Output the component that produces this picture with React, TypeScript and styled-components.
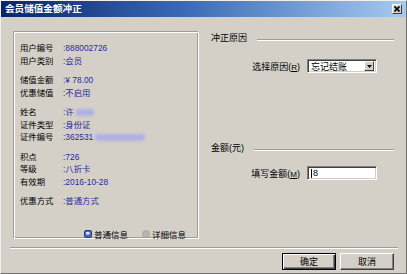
import styled, { createGlobalStyle } from 'styled-components'

const GlobalStyle = createGlobalStyle`
  html, body {
    margin: 0;
    padding: 0;
    background: #d4d0c8;
  }
  body {
    font-family: "Liberation Sans", "Noto Sans CJK SC", sans-serif;
    color: #000;
  }
`

// window frame

const Window = styled.div`
  width: 407px;
  height: 274px;
  box-sizing: border-box;
  border: 1px solid;
  border-color: #f2f0ec #6f6d68 #6f6d68 #f2f0ec;
  background: #d4d0c8;
  display: flex;
  flex-direction: column;
  overflow: hidden;
`

const TitleBar = styled.div`
  height: 16px;
  flex: none;
  display: flex;
  align-items: center;
  justify-content: space-between;
  padding: 0 4px 0 4px;
  background: linear-gradient(90deg, #0a246a 0%, #3a6ab4 45%, #a6caf0 100%);
`

const Title = styled.span`
  color: #fff;
  font-weight: bold;
  font-size: 9.6px;
  line-height: 16px;
`

const CloseBox = styled.div`
  width: 10px;
  height: 10px;
  box-sizing: border-box;
  background: #d4d0c8;
  border: 1px solid;
  border-color: #fff #404040 #404040 #fff;
  display: flex;
  align-items: center;
  justify-content: center;
`

const Main = styled.div`
  display: flex;
  gap: 12px;
  padding: 14px 12px 0 12px;
`

// left info panel

const Panel = styled.div`
  width: 186px;
  height: 208px;
  flex: none;
  box-sizing: border-box;
  border: 1px solid;
  border-color: #a09d97 #fff #fff #a09d97;
  box-shadow: inset 1px 1px #fff, inset -1px -1px #a09d97;
  padding: 10px 12px 0 6px;
  display: flex;
  flex-direction: column;
  font-size: 8.4px;
`

const Group = styled.div`
  margin-bottom: 7px;
`

const Row = styled.div`
  display: flex;
  align-items: center;
  height: 12.5px;
  line-height: 12.5px;
  white-space: nowrap;
`

const Label = styled.span`
  width: 43px;
  flex: none;
  color: #000;
`

const Value = styled.span`
  color: #2a2a9c;
  display: flex;
  align-items: center;
`

const Redacted = styled.span<{ $w: number }>`
  display: inline-block;
  width: ${({ $w }) => $w}px;
  height: 7px;
  margin-left: 2px;
  background: #aeb0e4;
  border-radius: 3px;
  filter: blur(1.4px);
`

const RadioRow = styled.div`
  margin-top: 13px;
  display: flex;
  justify-content: flex-end;
  gap: 14px;
  font-size: 8.5px;
`

const Radio = styled.span`
  display: flex;
  align-items: center;
  gap: 2px;
  color: #000;
`

// right column

const RightCol = styled.div`
  flex: 1;
  display: flex;
  flex-direction: column;
  font-size: 9px;
`

const GroupHeader = styled.div<{ $mt?: number }>`
  display: flex;
  align-items: center;
  height: 12px;
  margin-top: ${({ $mt = 0 }) => $mt}px;
`

const HeaderLine = styled.div`
  flex: 1;
  margin: 6px 0 0 10px;
  border-top: 1px solid #a09d97;
  border-bottom: 1px solid #fff;
`

const FieldRow = styled.div<{ $mt: number }>`
  display: flex;
  justify-content: flex-end;
  align-items: center;
  gap: 7px;
  padding-right: 17px;
  margin-top: ${({ $mt }) => $mt}px;
`

const Accel = styled.span`
  text-decoration: underline;
  font-size: 8px;
`

const Sunken = styled.div`
  width: 70px;
  height: 14px;
  box-sizing: border-box;
  background: #fff;
  border: 1px solid;
  border-color: #808080 #fff #fff #808080;
  box-shadow: inset 1px 1px #404040, inset -1px -1px #d4d0c8;
  display: flex;
  align-items: center;
  padding: 0 2px 0 3px;
  font-size: 9px;
  color: #000;
`

const ComboText = styled.span`
  flex: 1;
`

const DropButton = styled.span`
  width: 10px;
  height: 10px;
  box-sizing: border-box;
  background: #d4d0c8;
  border: 1px solid;
  border-color: #fff #404040 #404040 #fff;
  display: flex;
  align-items: center;
  justify-content: center;
`

const Caret = styled.span`
  width: 1px;
  height: 9px;
  background: #000;
  margin-right: 1px;
`

// bottom

const Separator = styled.div`
  margin: 8px 8px 0 9px;
  border-top: 1px solid #a09d97;
  border-bottom: 1px solid #fff;
`

const ButtonRow = styled.div`
  display: flex;
  justify-content: flex-end;
  gap: 4px;
  padding-right: 12px;
  margin-top: 4px;
`

const Button = styled.button<{ $default?: boolean }>`
  width: 54px;
  height: 17px;
  box-sizing: border-box;
  padding: 0;
  font-family: inherit;
  font-size: 9px;
  color: #000;
  background: #d4d0c8;
  border: 1px solid;
  border-color: ${({ $default }) => ($default ? '#000' : '#fff #404040 #404040 #fff')};
  box-shadow: ${({ $default }) =>
    $default
      ? 'inset 1px 1px #fff, inset -1px -1px #404040, inset -2px -2px #808080'
      : 'inset -1px -1px #808080'};
`

const info: [string, string, number?][][] = [
  [['用户编号', '888002726'], ['用户类别', '会员']],
  [['储值金额', '¥ 78.00'], ['优惠储值', '不启用']],
  [['姓名', '许', 18], ['证件类型', '身份证'], ['证件编号', '362531', 50]],
  [['积点', '726'], ['等级', '八折卡'], ['有效期', '2016-10-28']],
  [['优惠方式', '普通方式']],
]

export default function App() {
  return (
    <>
      <GlobalStyle />
      <Window>
        <TitleBar>
          <Title>会员储值金额冲正</Title>
          <CloseBox>
            <svg width="6" height="6" viewBox="0 0 6 6">
              <path d="M0.5 0.5L5.5 5.5M5.5 0.5L0.5 5.5" stroke="#000" strokeWidth="1.6" />
            </svg>
          </CloseBox>
        </TitleBar>

        <Main>
          <Panel>
            {info.map((group, gi) => (
              <Group key={gi}>
                {group.map(([label, value, blur]) => (
                  <Row key={label}>
                    <Label>{label}</Label>
                    <Value>
                      :{value}
                      {!!blur && <Redacted $w={blur} />}
                    </Value>
                  </Row>
                ))}
              </Group>
            ))}
            <RadioRow>
              <Radio>
                <svg width="8" height="8" viewBox="0 0 8 8">
                  <rect x="0.5" y="0.5" width="7" height="7" rx="1.5" fill="#4a66bd" stroke="#2b3f86" />
                  <rect x="2" y="2" width="3.5" height="2.5" fill="#dfe7ff" />
                </svg>
                普通信息
              </Radio>
              <Radio>
                <svg width="8" height="8" viewBox="0 0 8 8">
                  <circle cx="4" cy="4" r="3.4" fill="#b9b6af" stroke="#a19e97" strokeWidth="0.8" />
                </svg>
                详细信息
              </Radio>
            </RadioRow>
          </Panel>

          <RightCol>
            <GroupHeader>
              冲正原因
              <HeaderLine />
            </GroupHeader>
            <FieldRow $mt={16}>
              <span>
                选择原因(<Accel>R</Accel>)
              </span>
              <Sunken>
                <ComboText>忘记结账</ComboText>
                <DropButton>
                  <svg width="5" height="3" viewBox="0 0 5 3">
                    <path d="M0 0H5L2.5 3Z" fill="#000" />
                  </svg>
                </DropButton>
              </Sunken>
            </FieldRow>

            <GroupHeader $mt={68}>
              金额(元)
              <HeaderLine />
            </GroupHeader>
            <FieldRow $mt={13}>
              <span>
                填写金额(<Accel>M</Accel>)
              </span>
              <Sunken>
                <Caret />8
              </Sunken>
            </FieldRow>
          </RightCol>
        </Main>

        <Separator />
        <ButtonRow>
          <Button $default>确定</Button>
          <Button>取消</Button>
        </ButtonRow>
      </Window>
    </>
  )
}
